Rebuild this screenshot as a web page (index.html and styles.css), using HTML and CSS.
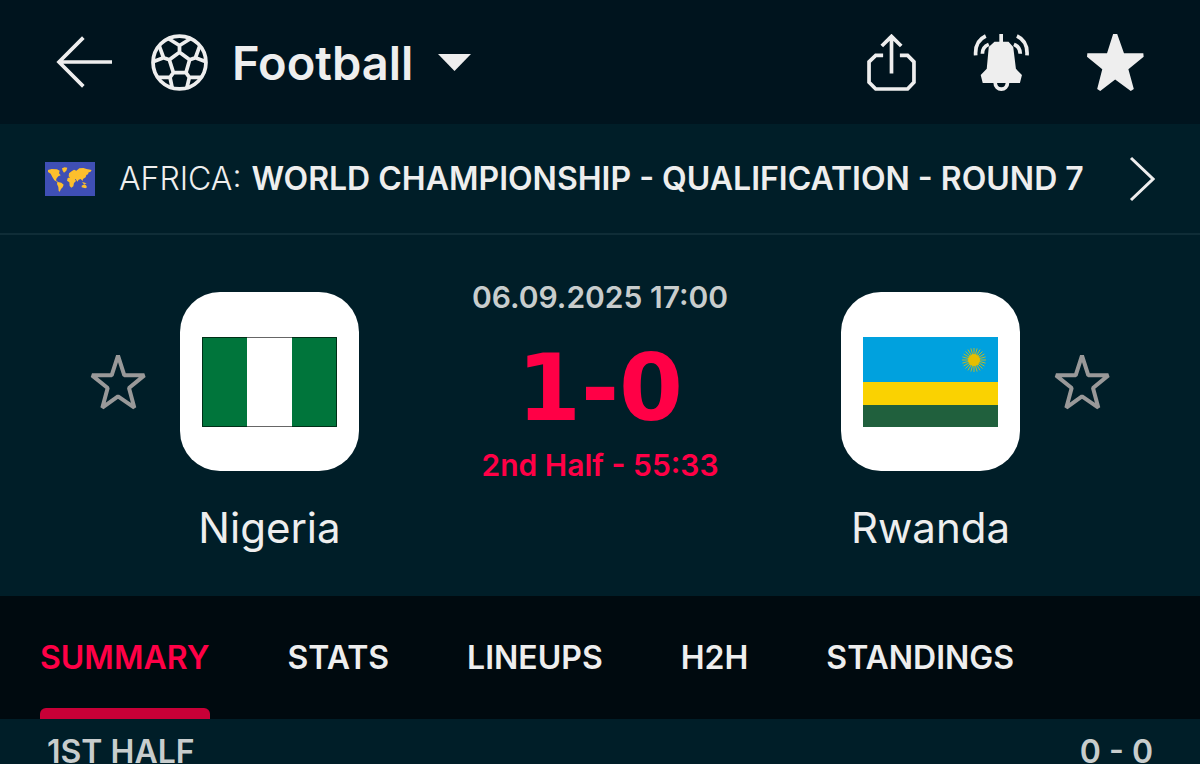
FILE: index.html
```
<!DOCTYPE html>
<html lang="en">
<head>
    <meta charset="UTF-8">
    <meta name="viewport" content="width=device-width, initial-scale=1.0">
    <title>Nigeria - Rwanda</title>
    <link rel="stylesheet" href="styles.css">
</head>
<body>
    <header class="topbar">
        <button class="icon-btn" aria-label="Back">
            <svg width="57" height="52" viewBox="0 0 171 156" fill="none" stroke="currentColor" stroke-width="11">
                <path d="M82 5L9 78l73 73M9 78h159"/>
            </svg>
        </button>
        <div class="sport">
            <svg width="57" height="57" viewBox="0 0 168 168" fill="none" stroke="currentColor" stroke-width="11">
                <circle cx="84" cy="84" r="78"/>
                <path d="M84 54l30 22-11 38H66L54 76zM84 54V34M84 34L52 14M84 34l32-20M54 76l-17-6M37 70L24 34M37 70L6 82M114 76l17-6M131 70l13-36M131 70l31 12M66 114l-10 14M56 128l7 34M56 128H20M103 114l10 14M113 128l-8 34M113 128h35"/>
            </svg>
            <select class="sport-select" aria-label="Sport">
                <option>Football</option>
            </select>
            <svg class="caret" width="33" height="17" viewBox="0 0 66 34" fill="currentColor">
                <path d="M0 0h66L33 34z"/>
            </svg>
        </div>
        <div class="actions">
            <button class="icon-btn" aria-label="Share">
                <svg width="49" height="57" viewBox="0 0 146 170" fill="none" stroke="currentColor" stroke-width="11">
                    <path d="M48 64H26L6 83v61l20 20h95l19-20V83l-19-19H98M73 118V8M44 36L73 7l29 29"/>
                </svg>
            </button>
            <button class="icon-btn" aria-label="Notifications">
                <svg width="57" height="57" viewBox="0 0 168 170" fill="none" stroke="currentColor" stroke-width="11">
                    <path fill="currentColor" stroke="none" d="M63 23h42l14 16 8 65 18 18-6 24H28l-6-24 18-18 6-65z"/>
                    <path d="M83 0v26M65 144c0 27 37 27 37 0M37 6C15 16 5 37 7 64M46 31c-13 5-19 14-19 28M130 6c22 10 32 31 30 58M121 31c13 5 19 14 19 28"/>
                </svg>
            </button>
            <button class="icon-btn" aria-label="Favourite match">
                <svg width="57" height="57" viewBox="0 0 168 168" fill="currentColor">
                    <path d="M77 0h12l20 57h57l1 10-45 37 16 58-9 6-46-34-44 34-9-6 15-58L0 67l1-10h58z"/>
                </svg>
            </button>
        </div>
    </header>

    <a class="league" href="#">
        <svg class="league-flag" width="50" height="34" viewBox="0 0 150 102">
            <path fill="#3f4fb5" d="M0 0h150v102H0z"/>
            <path fill="#fdbf2d" d="M9 24l11-3 16 1 8 4-2 8 5 6-7 3-5 6-2 6 6 5 10 2 7 6-3 8-5 5-4 8-3-2-1-12-4-9 1-6-9-5-6-10-5-10-8-5zM51 19l8-3 8 1-3 9-7 6-4-6zM71 43l1-9 9-7 6-4 7 3 9-7 12-1 10 3 15 3-4 6-5 1-2 6-5 2-2 7-8 5-1 6-6-6-6 2-4 6-5-8-7-2-4 2-6-4zM68 48l8-3 12 3 5 9-6 6-2 10-6 4-5-5-1-11-7-5zM111 60l9 2 5 3-9 1zM110 71l8-4 5 3 3 6-5 3-11-3z"/>
        </svg>
        <span class="league-region">AFRICA:</span>
        <span class="league-name">WORLD CHAMPIONSHIP - QUALIFICATION - ROUND 7</span>
        <svg class="league-arrow" width="26" height="46" viewBox="0 0 26 46" fill="none" stroke="currentColor" stroke-width="3">
            <path d="M2 2l22 21L2 44"/>
        </svg>
    </a>

    <main>
        <section class="match">
            <div class="team home">
                <button class="icon-btn team-star" aria-label="Follow Nigeria">
                    <svg width="56" height="56" viewBox="0 0 168 168" fill="none" stroke="currentColor" stroke-width="12" stroke-linejoin="bevel">
                        <path d="M84 5l19 59h60l-46 38 16 59-49-34-47 34 16-59L6 64h59z"/>
                    </svg>
                </button>
                <div class="team-logo">
                    <svg width="135" height="90" viewBox="0 0 135 90">
                        <path fill="#fff" d="M0 0h135v90H0z"/>
                        <path fill="#00753b" d="M0 0h45v90H0zM90 0h45v90H90z"/>
                        <path fill="none" stroke="#000" stroke-opacity=".6" d="M.5.5h134v89H.5z"/>
                    </svg>
                </div>
                <div class="team-name">Nigeria</div>
            </div>

            <div class="score-box">
                <div class="date">06.09.2025 17:00</div>
                <div class="score">1-0</div>
                <div class="stage">2nd Half - 55:33</div>
            </div>

            <div class="team away">
                <button class="icon-btn team-star" aria-label="Follow Rwanda">
                    <svg width="56" height="56" viewBox="0 0 168 168" fill="none" stroke="currentColor" stroke-width="12" stroke-linejoin="bevel">
                        <path d="M84 5l19 59h60l-46 38 16 59-49-34-47 34 16-59L6 64h59z"/>
                    </svg>
                </button>
                <div class="team-logo">
                    <svg width="135" height="90" viewBox="0 0 135 90">
                        <path fill="#00a1de" d="M0 0h135v45H0z"/>
                        <path fill="#fad201" d="M0 45h135v23H0z"/>
                        <path fill="#20603d" d="M0 68h135v22H0z"/>
                        <!-- sun: 24 rays and a disc -->
                        <g transform="translate(111 23)">
                            <path stroke="#e5be01" stroke-width=".8" d="M-12 0H12M-11.600-3.100L11.600 3.100M-10.400-6L10.400 6M-8.500-8.500L8.500 8.500M-6-10.400L6 10.400M-3.100-11.600L3.100 11.600M0-12V12M3.100-11.600L-3.100 11.600M6-10.400L-6 10.400M8.500-8.500L-8.500 8.500M10.400-6L-10.400 6M11.600-3.100L-11.600 3.100"/>
                            <circle r="6" fill="#e5be01"/>
                        </g>
                    </svg>
                </div>
                <div class="team-name">Rwanda</div>
            </div>
        </section>

        <nav class="tabs">
            <a class="tab active" href="#">SUMMARY</a>
            <a class="tab" href="#">STATS</a>
            <a class="tab" href="#">LINEUPS</a>
            <a class="tab" href="#">H2H</a>
            <a class="tab" href="#">STANDINGS</a>
        </nav>

        <section class="period">
            <span>1ST HALF</span>
            <span>0 - 0</span>
        </section>
    </main>
</body>
</html>
```
FILE: styles.css
```
* {
    box-sizing: border-box;
}

body {
    margin: 0;
    background-color: #001e28;
    color: #eeeeee;
    font-family: Inter, "Liberation Sans", sans-serif;
    font-size: 32px;
    line-height: 36px;
}

a {
    color: inherit;
    text-decoration: none;
}

svg {
    display: block;
    flex-shrink: 0;
}

.icon-btn {
    padding: 0;
    border: none;
    background: none;
    color: inherit;
    cursor: pointer;
}

/* top bar */
.topbar {
    display: flex;
    align-items: center;
    gap: 38px;
    height: 124px;
    padding: 0 56px;
    background-color: #00141e;
}

.sport {
    display: flex;
    align-items: center;
    gap: 24px;
}

.sport-select {
    appearance: none;
    padding: 0;
    border: none;
    background: none;
    color: inherit;
    font-family: inherit;
    font-size: 47px;
    font-weight: 600;
    cursor: pointer;
}

.caret {
    pointer-events: none;
}

.actions {
    display: flex;
    align-items: center;
    gap: 57px;
    margin-left: auto;
}

/* league row */
.league {
    display: flex;
    align-items: center;
    height: 111px;
    padding: 0 45px;
    border-bottom: 2px solid #0f2d37;
}

.league-region {
    margin-left: 24px;
    font-weight: 300;
}

.league-name {
    margin-left: 10px;
    font-weight: 600;
}

.league-arrow {
    margin-left: auto;
}

/* match header */
.match {
    display: flex;
    justify-content: space-between;
    height: 361px;
    padding: 57px 90px 0;
}

.team {
    display: grid;
    grid-template-rows: 179px auto;
    column-gap: 34px;
    row-gap: 32px;
    align-content: start;
    align-items: center;
}

.home {
    grid-template-columns: 56px 179px;
    grid-template-areas: "star logo" ". name";
}

.away {
    grid-template-columns: 179px 56px;
    grid-template-areas: "logo star" "name .";
}

.team-star {
    grid-area: star;
    color: #999999;
}

.team-logo {
    grid-area: logo;
    display: flex;
    align-items: center;
    justify-content: center;
    height: 179px;
    border-radius: 40px;
    background-color: #ffffff;
}

.team-name {
    grid-area: name;
    font-size: 42px;
    line-height: 50px;
    text-align: center;
}

.score-box {
    margin-top: -13px;
    text-align: center;
    font-size: 30px;
    font-weight: 600;
}

.date {
    color: #c8cdcd;
}

.score {
    margin: 32px 0 16px;
    color: #ff0046;
    font-family: "DejaVu Sans", sans-serif;
    font-size: 92px;
    font-weight: 700;
    line-height: 84px;
}

.stage {
    color: #ff0046;
}

/* tabs */
.tabs {
    display: flex;
    gap: 78px;
    height: 123px;
    padding: 0 40px;
    background-color: #000a0f;
    font-weight: 600;
}

.tab {
    display: flex;
    flex-direction: column;
    padding-top: 44px;
}

.active {
    color: #ff0046;
}

.active::after {
    content: "";
    height: 11px;
    margin-top: auto;
    border-radius: 6px 6px 0 0;
    background-color: #c80037;
}

.period {
    display: flex;
    justify-content: space-between;
    padding: 21px 47px 0;
    color: #c8cdcd;
    font-weight: 600;
    line-height: 24px;
}
```
